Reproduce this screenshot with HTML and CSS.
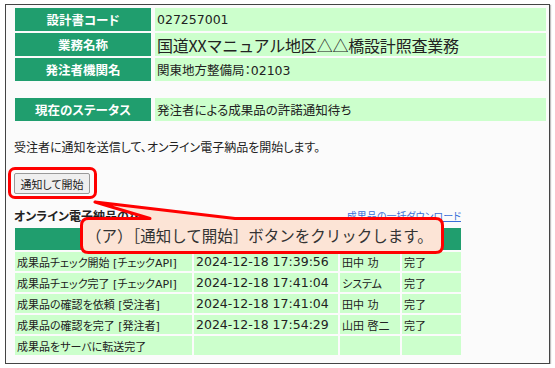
FILE: index.html
```html
<!DOCTYPE html>
<html lang="ja">
<head>
    <meta charset="UTF-8">
    <title>オンライン電子納品</title>
    <link rel="stylesheet" href="styles.css">
</head>
<body>
    <div class="frame">

        <section class="info">
            <div class="head">設計書コード</div>
            <div class="val">027257001</div>
            <div class="head">業務名称</div>
            <div class="val big">国道XXマニュアル地区△△橋設計照査業務</div>
            <div class="head">発注者機関名</div>
            <div class="val">関東地方整備局：02103</div>
            <div class="blank"></div>
            <div class="blank"></div>
            <div class="head">現在のステータス</div>
            <div class="val">発注者による成果品の許諾通知待ち</div>
        </section>

        <p class="msg">受注者に通知を送信して、オンライン電子納品を開始します。</p>

        <div class="mark">
            <button type="button" class="btn">通知して開始</button>
        </div>

        <div class="sub">
            <h2>オンライン電子納品の状況</h2>
            <a href="#" class="dl">成果品の一括ダウンロード</a>
        </div>

        <section class="log">
            <div class="th">処理</div>
            <div class="th">日時</div>
            <div class="th">担当者</div>
            <div class="th">状態</div>

            <div>成果品チェック開始 [チェックAPI]</div>
            <div class="dt">2024-12-18 17:39:56</div>
            <div>田中 功</div>
            <div>完了</div>

            <div>成果品チェック完了 [チェックAPI]</div>
            <div class="dt">2024-12-18 17:41:04</div>
            <div>システム</div>
            <div>完了</div>

            <div>成果品の確認を依頼 [受注者]</div>
            <div class="dt">2024-12-18 17:41:04</div>
            <div>田中 功</div>
            <div>完了</div>

            <div>成果品の確認を完了 [発注者]</div>
            <div class="dt">2024-12-18 17:54:29</div>
            <div>山田 啓二</div>
            <div>完了</div>

            <div>成果品をサーバに転送完了</div>
            <div></div>
            <div></div>
            <div></div>
        </section>

        <div class="callout">
            <svg width="555" height="368" viewBox="0 0 555 368">
                <path d="M88.5 218.5 H150 L95 202 L235 218.5 H435.5 Q442.5 218.5 442.5 225.5 V245.5 Q442.5 252.5 435.5 252.5 H88.5 Q81.5 252.5 81.5 245.5 V225.5 Q81.5 218.5 88.5 218.5 Z"
                      fill="#fce4d6" stroke="#ff0000" stroke-width="3" stroke-linejoin="round"/>
            </svg>
            <span class="note">（ア）［通知して開始］ボタンをクリックします。</span>
        </div>

    </div>
</body>
</html>
```

FILE: styles.css
```css
* {
    box-sizing: border-box;
    margin: 0;
    padding: 0;
}

body {
    background: #ffffff;
    font-family: 'DejaVu Sans', 'Noto Sans CJK JP', sans-serif;
    font-feature-settings: "palt";
    color: #222;
}

.frame {
    position: relative;
    margin: 4px 0 0 5px;
    width: 545px;
    height: 360px;
    padding: 3px 2px 0 8px;
    border: 1px solid #444;
    background: #fbfbfb;
    box-shadow: 1px 1px 1px rgba(0, 0, 0, 0.25);
    overflow: hidden;
}

/* top info block */
.info {
    display: grid;
    grid-template-columns: 136px 391px;
    grid-template-rows: 23px 23px 23px 13px 23px;
    gap: 2px 4px;
    margin-left: 1px;
}

.info .head {
    background: #209e6e;
    color: #fff;
    font-weight: bold;
    font-size: 12.5px;
    display: flex;
    align-items: center;
    justify-content: center;
}

.info .val {
    background: #ccffcc;
    font-size: 12.5px;
    padding-left: 2px;
    display: flex;
    align-items: center;
}

.info .big {
    font-family: 'Noto Sans CJK JP', sans-serif;
    font-feature-settings: normal;
    font-size: 16px;
    letter-spacing: -0.2px;
}

.msg {
    margin-top: 19px;
    font-size: 12px;
    line-height: 16px;
}

.mark {
    display: inline-block;
    margin: 11px 0 0 -6px;
    padding: 3px 4px 2px 3px;
    border: 3px solid #ff0000;
    border-radius: 7px;
}

.btn {
    display: block;
    width: 76px;
    height: 21px;
    font-family: inherit;
    font-feature-settings: "palt";
    font-size: 11px;
    color: #222;
    background: #efefef;
    border: 1px solid #999;
    border-radius: 2px;
}

.sub {
    width: 447px;
    margin: 10px 0 0 0;
    display: flex;
    justify-content: space-between;
    align-items: flex-end;
    line-height: 16px;
}

.sub h2 {
    font-size: 12px;
    font-weight: bold;
}

.dl {
    font-size: 10px;
    color: #3a6fd8;
}

/* log table */
.log {
    display: grid;
    grid-template-columns: 177px 144px 60px 59px;
    grid-template-rows: 22px repeat(5, 19px);
    gap: 2px;
    margin: 3px 0 0 1px;
    font-size: 11px;
}

.log div {
    background: #ccffcc;
    padding-left: 2px;
    display: flex;
    align-items: center;
    white-space: nowrap;
    overflow: hidden;
}

.log .dt {
    font-size: 12.5px;
}

.log .th {
    background: #209e6e;
    color: #fff;
    font-weight: bold;
    justify-content: center;
}

/* annotation bubble */
.callout {
    position: absolute;
    left: -6px;
    top: -5px;
    width: 555px;
    height: 368px;
    pointer-events: none;
}

.callout svg {
    position: absolute;
    left: 0;
    top: 0;
}

.note {
    position: absolute;
    left: 86px;
    top: 224px;
    font-family: 'Noto Sans CJK JP', sans-serif;
    font-feature-settings: normal;
    font-size: 15.5px;
    line-height: 22px;
    color: #333;
}
```
